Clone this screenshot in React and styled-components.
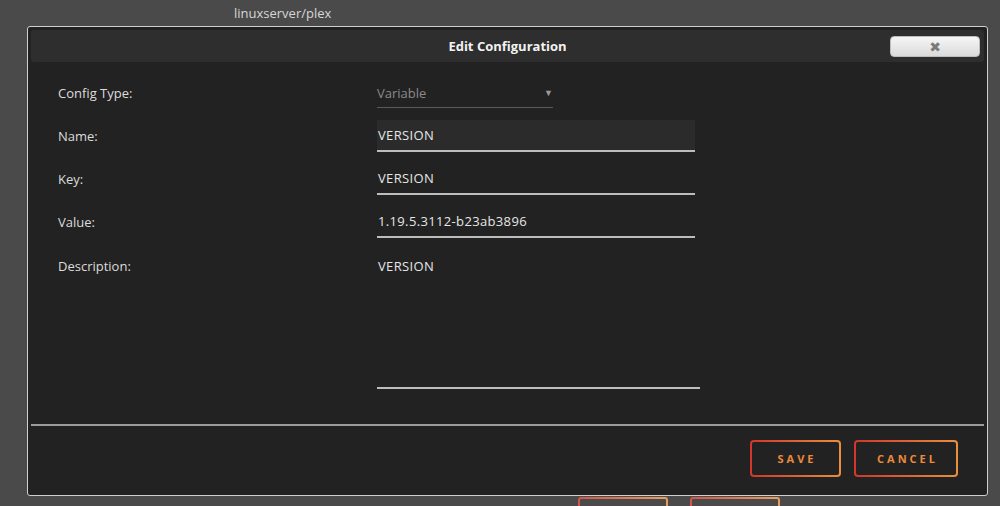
import React from "react";
import styled, { createGlobalStyle } from "styled-components";

const GlobalStyle = createGlobalStyle`
  *, *::before, *::after {
    box-sizing: border-box;
  }
  html, body {
    margin: 0;
    padding: 0;
    background: #4a4a4a;
    overflow: hidden;
  }
  body {
    font-family: "Open Sans", "Noto Sans", sans-serif;
    color: #e2e2e2;
  }
`;

const rows = [
  { label: "Name:", value: "VERSION", focused: true },
  { label: "Key:", value: "VERSION" },
  { label: "Value:", value: "1.19.5.3112-b23ab3896" },
];

export default function App() {
  return (
    <Page>
      <GlobalStyle />
      <PageTitle>linuxserver/plex</PageTitle>
      <Dialog>
        <TitleBar>
          <Title>Edit Configuration</Title>
          <CloseButton>✖</CloseButton>
        </TitleBar>
        <Form>
          <Row>
            <Label>Config Type:</Label>
            <Select>
              <span>Variable</span>
              <Arrow>▼</Arrow>
            </Select>
          </Row>
          {rows.map((r) => (
            <Row key={r.label}>
              <Label>{r.label}</Label>
              <Input $focused={r.focused}>{r.value}</Input>
            </Row>
          ))}
          <Row $top>
            <Label $top>Description:</Label>
            <TextArea>VERSION</TextArea>
          </Row>
        </Form>
        <Footer>
          <Button $w={91}>SAVE</Button>
          <Button $w={104}>CANCEL</Button>
        </Footer>
      </Dialog>
      <BackButtons>
        <GhostButton $w={90} />
        <GhostButton $w={90} />
      </BackButtons>
    </Page>
  );
}

const Page = styled.div`
  height: 506px;
  overflow: hidden;
  display: flex;
  flex-direction: column;
`;

const PageTitle = styled.div`
  flex-shrink: 0;
  height: 26px;
  padding-left: 234px;
  font-size: 13px;
  line-height: 26px;
  color: #d6d6d6;
`;

const Dialog = styled.div`
  flex-shrink: 0;
  margin-left: 27px;
  width: 961px;
  height: 470px;
  border: 1px solid #cfcfcf;
  border-radius: 3px;
  background: #222222;
  padding: 3px;
  display: flex;
  flex-direction: column;
`;

const TitleBar = styled.div`
  position: relative;
  flex-shrink: 0;
  height: 32px;
  background: #2e2e2e;
  border-radius: 3px;
  display: flex;
  align-items: center;
  justify-content: center;
`;

const Title = styled.div`
  font-size: 13px;
  font-weight: 700;
  color: #f2f2f2;
`;

const CloseButton = styled.div`
  position: absolute;
  right: 4px;
  top: 6px;
  width: 90px;
  height: 21px;
  border-radius: 4px;
  background: linear-gradient(#f6f6f6, #dadada);
  border: 1px solid #bdbdbd;
  display: flex;
  align-items: center;
  justify-content: center;
  font-size: 14px;
  font-family: "DejaVu Sans", sans-serif;
  color: #7a7a7a;
`;

const Form = styled.div`
  flex-shrink: 0;
  padding: 9px 0 0 27px;
  display: flex;
  flex-direction: column;
  height: 362px;
`;

const Row = styled.div`
  display: grid;
  grid-template-columns: 319px 1fr;
  align-items: ${(p) => (p.$top ? "start" : "center")};
  height: ${(p) => (p.$top ? "auto" : "43px")};
  padding-top: ${(p) => (p.$top ? "8px" : "0")};
`;

const Label = styled.div`
  font-size: 13px;
  color: #dcdcdc;
  padding-top: ${(p) => (p.$top ? "6px" : "0")};
`;

const Select = styled.div`
  width: 176px;
  height: 31px;
  border-bottom: 1px solid #5a5a5a;
  display: flex;
  align-items: center;
  justify-content: space-between;
  font-size: 13px;
  color: #8a8a8a;
  padding-top: 1px;
`;

const Arrow = styled.span`
  font-size: 9px;
  color: #9a9a9a;
`;

const Input = styled.div`
  width: 318px;
  height: 32px;
  border-bottom: 2px solid #bdbdbd;
  background: ${(p) => (p.$focused ? "#2b2b2b" : "transparent")};
  display: flex;
  align-items: center;
  padding-left: 1px;
  font-size: 13px;
  letter-spacing: 0.35px;
  color: #e6e6e6;
`;

const TextArea = styled.div`
  width: 323px;
  height: 138px;
  border-bottom: 2px solid #bdbdbd;
  padding: 6px 0 0 1px;
  font-size: 13px;
  letter-spacing: 0.35px;
  color: #e6e6e6;
`;

const Footer = styled.div`
  flex-shrink: 0;
  border-top: 2px solid #9c9c9c;
  display: flex;
  justify-content: flex-end;
  gap: 13px;
  padding: 14px 26px 0 0;
`;

const Button = styled.div`
  width: ${(p) => p.$w}px;
  height: 37px;
  border: 2px solid transparent;
  border-radius: 4px;
  background: linear-gradient(#222, #222) padding-box,
    linear-gradient(90deg, #d2352c, #ea8f3c) border-box;
  display: flex;
  align-items: center;
  justify-content: center;
  padding-left: 3px;
  font-size: 11px;
  font-weight: 700;
  letter-spacing: 3px;
  color: #ec8a3a;
`;

const BackButtons = styled.div`
  flex-shrink: 0;
  display: flex;
  gap: 22px;
  padding: 1px 0 0 578px;
`;

const GhostButton = styled.div`
  width: ${(p) => p.$w}px;
  height: 30px;
  border: 2px solid transparent;
  border-radius: 3px;
  background: linear-gradient(#4a4a4a, #4a4a4a) padding-box,
    linear-gradient(90deg, #d2554c, #ea9f5c) border-box;
`;
